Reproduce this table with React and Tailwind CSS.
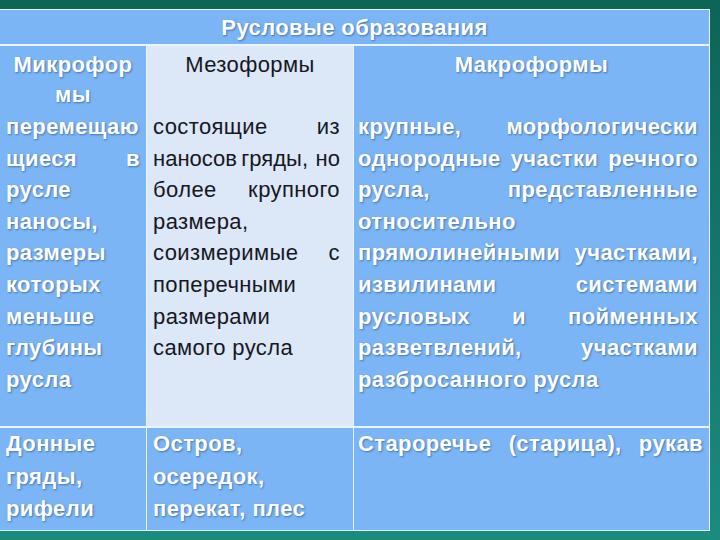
import React from 'react'

// Lines are laid out as in the slide; justified lines stretch to the cell width
const micro = [
  ['перемещаю', true],
  ['щиеся в', true],
  ['русле', false],
  ['наносы,', false],
  ['размеры', false],
  ['которых', false],
  ['меньше', false],
  ['глубины', false],
  ['русла', false],
]

const meso = [
  ['состоящие из', true],
  ['наносов\u2009гряды, но', true, 'tracking-normal'],
  ['более крупного', true],
  ['размера,', false],
  ['соизмеримые с', true],
  ['поперечными', false],
  ['размерами', false],
  ['самого русла', false],
]

const macro = [
  ['крупные, морфологически', true],
  ['однородные участки речного', true],
  ['русла, представленные', true],
  ['относительно', false],
  ['прямолинейными участками,', true],
  ['извилинами системами', true],
  ['русловых и пойменных', true],
  ['разветвлений, участками', true],
  ['разбросанного русла', false],
]

const shadow = '[text-shadow:1px_1px_2px_rgba(0,40,100,0.45)]'

function Lines({ lines, light }) {
  return (
    <div className={light ? 'font-bold text-white ' + shadow : 'text-[#16181f]'}>
      {lines.map(([text, justify, extra], i) => (
        <div
          key={i}
          className={
            (justify ? 'whitespace-nowrap text-justify [text-align-last:justify]' : 'whitespace-nowrap') +
            (extra ? ' ' + extra : '')
          }
        >
          {text}
        </div>
      ))}
    </div>
  )
}

function App() {
  return (
    <div className="w-[720px] h-[540px] overflow-hidden bg-gradient-to-b from-[#0c6556] to-[#1b8b80] pt-[9px] font-['Liberation_Sans',Arial,sans-serif] text-[22px] tracking-[0.4px]">
      <div className="w-[710px] flex flex-col bg-[#e9f4ff] border-t border-r border-[#e9f4ff]">
        {/* Title */}
        <div className={'h-[34px] bg-[#7bb5f5] flex items-center justify-center pt-px font-bold text-white ' + shadow}>
          Русловые образования
        </div>

        {/* Column heads */}
        <div className="mt-[2px] h-[61px] grid grid-cols-[146px_206px_355px] gap-x-px">
          <div className={'bg-[#7bb5f5] pt-[4px] text-center leading-[30px] font-bold text-white ' + shadow}>
            <div>Микрофор</div>
            <div>мы</div>
          </div>
          <div className="bg-[#dce7f8] pt-[4px] text-center leading-[30px] text-[#16181f]">Мезоформы</div>
          <div className={'bg-[#7bb5f5] pt-[4px] text-center leading-[30px] font-bold text-white ' + shadow}>
            Макроформы
          </div>
        </div>

        {/* Main row */}
        <div className="mt-px h-[318px] grid grid-cols-[146px_206px_355px] gap-x-px leading-[31.6px]">
          <div className="bg-[#7bb5f5] pt-[3px] pl-[6px] pr-[6px]">
            <Lines lines={micro} light />
          </div>
          <div className="bg-[#dce7f8] pt-[3px] pl-[6px] pr-[13px]">
            <Lines lines={meso} />
          </div>
          <div className="bg-[#7bb5f5] pt-[3px] pl-[4px] pr-[11px]">
            <Lines lines={macro} light />
          </div>
        </div>

        {/* Bottom row */}
        <div className="mt-[2px] h-[102px] grid grid-cols-[146px_206px_355px] gap-x-px leading-[32.5px]">
          <div className="bg-[#7bb5f5] pl-[6px]">
            <Lines lines={[['Донные', false], ['гряды,', false], ['рифели', false]]} light />
          </div>
          <div className="bg-[#7bb5f5] pl-[6px]">
            <Lines lines={[['Остров,', false], ['осередок,', false], ['перекат, плес', false]]} light />
          </div>
          <div className="bg-[#7bb5f5] pl-[4px] pr-[6px]">
            <Lines lines={[['Староречье (старица), рукав', true]]} light />
          </div>
        </div>
        <div className="h-px" />
      </div>
    </div>
  )
}

export default App
